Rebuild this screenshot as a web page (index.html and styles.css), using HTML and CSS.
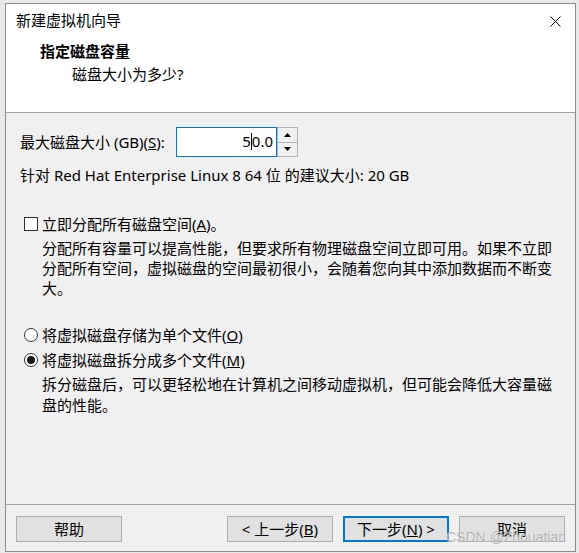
FILE: index.html
```html
<!DOCTYPE html>
<html lang="zh-CN">
<head>
<meta charset="utf-8">
<title>新建虚拟机向导</title>
<link rel="stylesheet" href="styles.css">
</head>
<body>
<div class="window">
  <div class="top">
    <div class="titlebar">
      <span class="title">新建虚拟机向导</span>
      <svg class="close" width="11" height="11" viewBox="0 0 11 11"><path d="M0.5 0.5L10.5 10.5M10.5 0.5L0.5 10.5" stroke="#000" stroke-width="1"/></svg>
    </div>
    <div class="header">
      <div class="h-title">指定磁盘容量</div>
      <div class="h-sub">磁盘大小为多少?</div>
    </div>
  </div>
  <div class="body">
    <div class="size-row">
      <span class="lbl">最大磁盘大小 (GB)(<u>S</u>):</span>
      <div class="spin">
        <div class="spin-input">5<span class="caret"></span>0.0</div>
        <div class="spin-btns">
          <div class="sbtn"><svg width="7" height="4" viewBox="0 0 7 4"><path d="M3.5 0L7 4H0Z" fill="#000"/></svg></div>
          <div class="sbtn"><svg width="7" height="4" viewBox="0 0 7 4"><path d="M0 0H7L3.5 4Z" fill="#000"/></svg></div>
        </div>
      </div>
    </div>
    <div class="info">针对 Red Hat Enterprise Linux 8 64 位 的建议大小: 20 GB</div>

    <div class="opt check-row">
      <span class="checkbox"></span>
      <span>立即分配所有磁盘空间(<u>A</u>)。</span>
    </div>
    <div class="desc">分配所有容量可以提高性能，但要求所有物理磁盘空间立即可用。如果不立即分配所有空间，虚拟磁盘的空间最初很小，会随着您向其中添加数据而不断变大。</div>

    <div class="opt radio-row first">
      <span class="radio"></span>
      <span>将虚拟磁盘存储为单个文件(<u>O</u>)</span>
    </div>
    <div class="opt radio-row">
      <span class="radio on"></span>
      <span>将虚拟磁盘拆分成多个文件(<u>M</u>)</span>
    </div>
    <div class="desc desc2">拆分磁盘后，可以更轻松地在计算机之间移动虚拟机，但可能会降低大容量磁盘的性能。</div>
  </div>
  <div class="footer">
    <button class="btn">帮助</button>
    <div class="spacer"></div>
    <button class="btn">&lt; 上一步(<u>B</u>)</button>
    <button class="btn primary">下一步(<u>N</u>) &gt;</button>
    <button class="btn">取消</button>
  </div>
  <div class="watermark">CSDN @Zhouatian</div>
</div>
</body>
</html>
```

FILE: styles.css
```css
* { box-sizing: border-box; }
html, body {
  margin: 0;
  padding: 0;
  width: 579px;
  height: 553px;
  overflow: hidden;
  background: #e9e9e9;
}
body {
  padding: 3px 0 0 5px;
  font-family: "Noto Sans", "Noto Sans CJK SC", sans-serif;
  font-size: 15px;
  color: #000;
}
.window {
  position: relative;
  width: 571px;
  height: 549px;
  border: 1px solid #8c8c8c;
  background: #f0f0f0;
  display: flex;
  flex-direction: column;
}
.top {
  background: #fff;
  height: 109px;
  border-bottom: 1px solid #a0a0a0;
  flex: none;
}
.titlebar {
  height: 33px;
  display: flex;
  align-items: center;
  padding: 0 14px 0 10px;
}
.title {
  flex: 1;
  line-height: 20px;
  padding-bottom: 2px;
}
.close { display: block; margin-top: 2px; }
.header {
  padding-left: 34px;
}
.h-title {
  font-weight: bold;
  line-height: 20px;
  margin-top: 4px;
}
.h-sub {
  line-height: 20px;
  margin-top: 3px;
  padding-left: 32px;
}
.body {
  flex: 1;
  padding: 14px 0 0 14px;
}
.size-row {
  display: flex;
  align-items: center;
  height: 30px;
}
.lbl { width: 156px; line-height: 20px; }
.spin { display: flex; height: 30px; }
.spin-input {
  width: 101px;
  height: 30px;
  background: #fff;
  border: 1px solid #0078d7;
  text-align: right;
  padding-right: 3px;
  line-height: 27px;
}
.caret {
  display: inline-block;
  width: 1px;
  height: 17px;
  background: #000;
  vertical-align: -3px;
}
.spin-btns {
  width: 21px;
  display: flex;
  flex-direction: column;
  border: 1px solid #b4b4b4;
  border-left: none;
  background: #f0f0f0;
}
.sbtn {
  flex: 1;
  display: flex;
  align-items: center;
  justify-content: center;
  border-left: 1px solid #b4b4b4;
}
.sbtn + .sbtn { border-top: 1px solid #b4b4b4; }
.sbtn svg { display: block; }
.info {
  line-height: 20px;
  margin-top: 8px;
}
.opt {
  display: flex;
  align-items: center;
  height: 20px;
  line-height: 20px;
}
.check-row { margin-top: 29px; }
.checkbox {
  width: 14px;
  height: 14px;
  border: 1px solid #333;
  background: #fff;
  margin: 0 4px 0 4px;
  flex: none;
}
.radio {
  width: 14px;
  height: 14px;
  border: 1px solid #333;
  border-radius: 50%;
  background: #fff;
  margin: 0 4px 0 4px;
  flex: none;
  display: flex;
  align-items: center;
  justify-content: center;
}
.radio.on::after {
  content: "";
  width: 8px;
  height: 8px;
  border-radius: 50%;
  background: #1a1a1a;
}
.desc {
  margin-top: 4px;
  padding-left: 22px;
  padding-right: 14px;
  line-height: 20px;
}
.radio-row.first { margin-top: 27px; }
.radio-row + .radio-row { margin-top: 5px; }
.desc2 { line-height: 21px; }
.footer {
  flex: none;
  height: 47px;
  border-top: 1px solid #a0a0a0;
  display: flex;
  align-items: flex-start;
  padding: 11px 10px 0 10px;
  gap: 10px;
}
.spacer { flex: 1; }
.btn {
  font: inherit;
  width: 106px;
  height: 26px;
  border: 1px solid #adadad;
  background: #e1e1e1;
  color: #000;
  padding: 0;
  line-height: 22px;
}
.btn.primary { border: 2px solid #0078d7; }
.watermark {
  position: absolute;
  right: 9px;
  bottom: 6px;
  font-family: "Liberation Sans", Arial, sans-serif;
  font-size: 14px;
  color: rgba(150, 150, 150, 0.75);
  text-shadow: 0 0 1px #fff;
  pointer-events: none;
}
```
